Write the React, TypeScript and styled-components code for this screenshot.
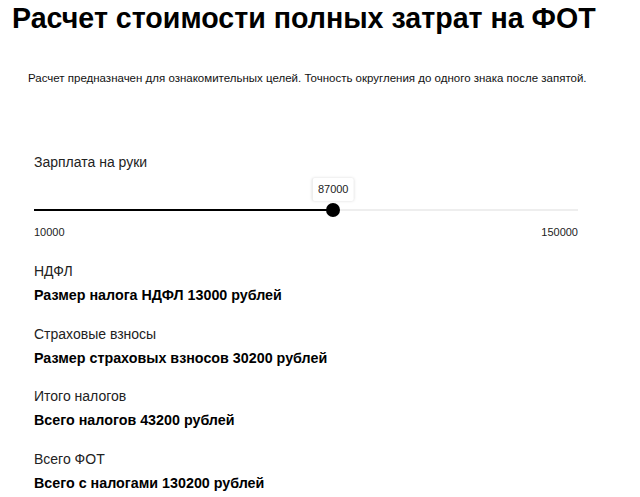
import React, { useState } from 'react';
import styled, { createGlobalStyle } from 'styled-components';

const MIN = 10000;
const MAX = 150000;

const GlobalStyle = createGlobalStyle`
  body {
    margin: 0;
    background: #fff;
    font-family: 'Liberation Sans', Arial, sans-serif;
    color: #000;
  }
`;

const Page = styled.div`
  padding: 0 12px;
`;

const Title = styled.h1`
  margin: 0;
  padding-top: 1px;
  font-size: 28.6px;
  line-height: 34px;
  font-weight: 700;
  white-space: nowrap;
`;

const Content = styled.div`
  padding: 0 22px;
  width: 544px;
`;

const Note = styled.p`
  margin: 35px 0 0 -6px;
  font-size: 11.5px;
  line-height: 16px;
  color: #111;
  white-space: nowrap;
`;

const SliderBlock = styled.div`
  margin-top: 67px;
`;

const Label = styled.div`
  font-size: 14px;
  line-height: 18px;
  color: #222;
`;

const Track = styled.div`
  position: relative;
  margin-top: 38px;
  height: 2px;
  background: #eeeeee;
`;

const Fill = styled.div`
  height: 2px;
  background: #000;
`;

const Thumb = styled.div`
  position: absolute;
  top: 50%;
  width: 14px;
  height: 14px;
  margin: -7px 0 0 -7px;
  border-radius: 50%;
  background: #000;
`;

const Bubble = styled.div`
  position: absolute;
  bottom: 10px;
  transform: translateX(-50%);
  padding: 5px 5px;
  background: #fff;
  font-size: 11px;
  line-height: 13px;
  color: #222;
  box-shadow: 0 0 3px rgba(0, 0, 0, 0.15);
  border-radius: 2px;
`;

const Scale = styled.div`
  display: flex;
  justify-content: space-between;
  margin-top: 15px;
  font-size: 11px;
  line-height: 13px;
  color: #222;
`;

const Results = styled.div`
  display: flex;
  flex-direction: column;
  gap: 20.5px;
  margin-top: 23px;
`;

const Result = styled.div`
  display: flex;
  flex-direction: column;
  gap: 6px;
`;

const Value = styled.div`
  font-size: 14.3px;
  line-height: 18px;
  font-weight: 700;
`;

const App = () => {
  const [salary] = useState(87000);
  const ndfl = 13000;
  const insurance = 30200;
  const taxes = ndfl + insurance;
  const total = salary + taxes;
  const pos = ((salary - MIN) / (MAX - MIN)) * 100;

  const rows = [
    { label: 'НДФЛ', text: `Размер налога НДФЛ ${ndfl} рублей` },
    { label: 'Страховые взносы', text: `Размер страховых взносов ${insurance} рублей` },
    { label: 'Итого налогов', text: `Всего налогов ${taxes} рублей` },
    { label: 'Всего ФОТ', text: `Всего с налогами ${total} рублей` },
  ];

  return (
    <Page>
      <GlobalStyle />
      <Title>Расчет стоимости полных затрат на ФОТ</Title>
      <Content>
        <Note>
          Расчет предназначен для ознакомительных целей. Точность округления до одного знака после запятой.
        </Note>
        <SliderBlock>
          <Label>Зарплата на руки</Label>
          <Track>
            <Fill style={{ width: `${pos}%` }} />
            <Bubble style={{ left: `${pos}%` }}>{salary}</Bubble>
            <Thumb style={{ left: `${pos}%` }} />
          </Track>
          <Scale>
            <span>{MIN}</span>
            <span>{MAX}</span>
          </Scale>
        </SliderBlock>
        <Results>
          {rows.map((r) => (
            <Result key={r.label}>
              <Label>{r.label}</Label>
              <Value>{r.text}</Value>
            </Result>
          ))}
        </Results>
      </Content>
    </Page>
  );
};

export default App;
